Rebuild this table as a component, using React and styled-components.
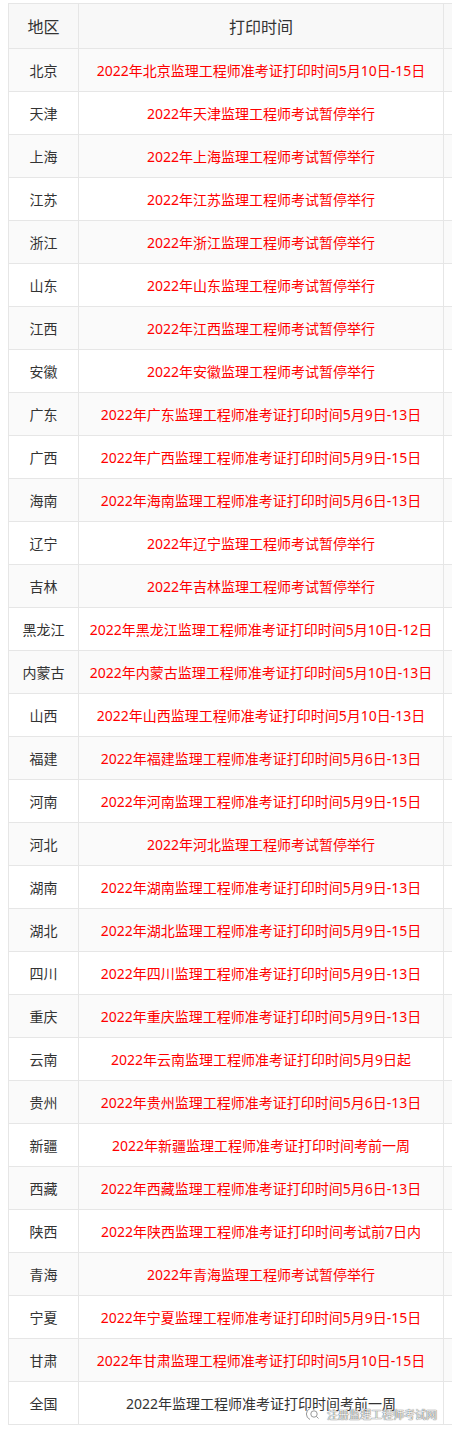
import React from 'react';
import styled, { createGlobalStyle } from 'styled-components';

const GlobalStyle = createGlobalStyle`
  html, body {
    margin: 0;
    padding: 0;
    background: #fff;
    overflow: hidden;
  }
  body {
    font-family: "Noto Sans", "Noto Sans CJK SC", sans-serif;
  }
`;

const Page = styled.div`
  position: relative;
  width: 452px;
  padding: 3px 0 0 8px;
  box-sizing: border-box;
  overflow: hidden;
`;

const Table = styled.table`
  border-collapse: collapse;
  table-layout: fixed;
  width: 520px;
  color: #333;
`;

const HeadCell = styled.th`
  height: 44px;
  padding: 0;
  border: 1px solid #e6e6e6;
  background: #f8f8f8;
  font-size: 16px;
  font-weight: normal;
  text-align: center;
  vertical-align: middle;
`;

const Row = styled.tr`
  background: ${(p) => (p.$odd ? '#fafafa' : '#fff')};
`;

const Cell = styled.td`
  height: 42px;
  padding: 0;
  border: 1px solid #e6e6e6;
  font-size: 14px;
  text-align: center;
  vertical-align: middle;
  white-space: nowrap;
  color: ${(p) => (p.$red ? '#ff0000' : '#333')};
`;

const Watermark = styled.div`
  position: absolute;
  left: 305px;
  top: 1406px;
  display: flex;
  align-items: center;
  gap: 6px;
  font-size: 11px;
  color: rgba(255, 255, 255, 0.95);
  text-shadow: 0 0 1px rgba(0, 0, 0, 0.7), 0 0 1px rgba(0, 0, 0, 0.5);
  letter-spacing: 0px;
`;

const rows = [
  ['北京', '2022年北京监理工程师准考证打印时间5月10日-15日', true],
  ['天津', '2022年天津监理工程师考试暂停举行', true],
  ['上海', '2022年上海监理工程师考试暂停举行', true],
  ['江苏', '2022年江苏监理工程师考试暂停举行', true],
  ['浙江', '2022年浙江监理工程师考试暂停举行', true],
  ['山东', '2022年山东监理工程师考试暂停举行', true],
  ['江西', '2022年江西监理工程师考试暂停举行', true],
  ['安徽', '2022年安徽监理工程师考试暂停举行', true],
  ['广东', '2022年广东监理工程师准考证打印时间5月9日-13日', true],
  ['广西', '2022年广西监理工程师准考证打印时间5月9日-15日', true],
  ['海南', '2022年海南监理工程师准考证打印时间5月6日-13日', true],
  ['辽宁', '2022年辽宁监理工程师考试暂停举行', true],
  ['吉林', '2022年吉林监理工程师考试暂停举行', true],
  ['黑龙江', '2022年黑龙江监理工程师准考证打印时间5月10日-12日', true],
  ['内蒙古', '2022年内蒙古监理工程师准考证打印时间5月10日-13日', true],
  ['山西', '2022年山西监理工程师准考证打印时间5月10日-13日', true],
  ['福建', '2022年福建监理工程师准考证打印时间5月6日-13日', true],
  ['河南', '2022年河南监理工程师准考证打印时间5月9日-15日', true],
  ['河北', '2022年河北监理工程师考试暂停举行', true],
  ['湖南', '2022年湖南监理工程师准考证打印时间5月9日-13日', true],
  ['湖北', '2022年湖北监理工程师准考证打印时间5月9日-15日', true],
  ['四川', '2022年四川监理工程师准考证打印时间5月9日-13日', true],
  ['重庆', '2022年重庆监理工程师准考证打印时间5月9日-13日', true],
  ['云南', '2022年云南监理工程师准考证打印时间5月9日起', true],
  ['贵州', '2022年贵州监理工程师准考证打印时间5月6日-13日', true],
  ['新疆', '2022年新疆监理工程师准考证打印时间考前一周', true],
  ['西藏', '2022年西藏监理工程师准考证打印时间5月6日-13日', true],
  ['陕西', '2022年陕西监理工程师准考证打印时间考试前7日内', true],
  ['青海', '2022年青海监理工程师考试暂停举行', true],
  ['宁夏', '2022年宁夏监理工程师准考证打印时间5月9日-15日', true],
  ['甘肃', '2022年甘肃监理工程师准考证打印时间5月10日-15日', true],
  ['全国', '2022年监理工程师准考证打印时间考前一周', false],
];

function SearchMark() {
  return (
    <svg width="16" height="14" viewBox="0 0 16 14" fill="none">
      <path d="M5 1.5 A6 6 0 0 0 5 12.5" stroke="#999" strokeWidth="1" />
      <circle cx="9" cy="7" r="3.2" stroke="#999" strokeWidth="1" />
      <path d="M11.3 9.3 L13.5 11.5" stroke="#999" strokeWidth="1" />
    </svg>
  );
}

export default function App() {
  return (
    <>
      <GlobalStyle />
      <Page>
        <Table>
          <colgroup>
            <col style={{ width: 70 }} />
            <col style={{ width: 365 }} />
            <col style={{ width: 85 }} />
          </colgroup>
          <thead>
            <tr>
              <HeadCell>地区</HeadCell>
              <HeadCell>打印时间</HeadCell>
              <HeadCell />
            </tr>
          </thead>
          <tbody>
            {rows.map(([area, text, red], i) => (
              <Row key={area} $odd={i % 2 === 0}>
                <Cell>{area}</Cell>
                <Cell $red={red}>{text}</Cell>
                <Cell />
              </Row>
            ))}
          </tbody>
        </Table>
        <Watermark>
          <SearchMark />
          <span>注册监理工程师考试网</span>
        </Watermark>
      </Page>
    </>
  );
}
